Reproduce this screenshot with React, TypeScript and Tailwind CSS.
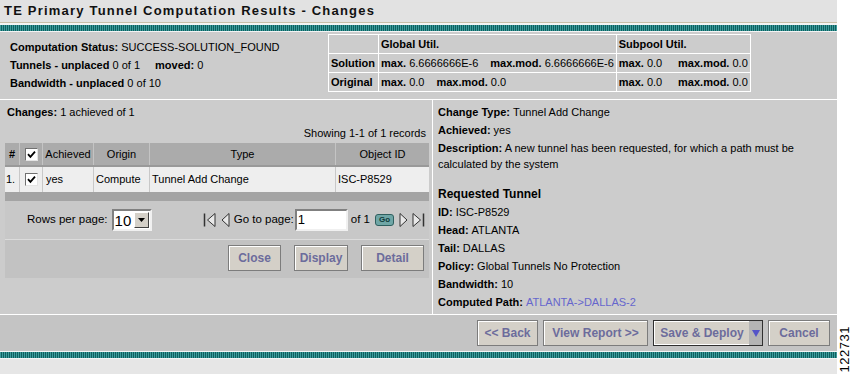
import React from 'react'

const tealBar =
  'h-[6px] bg-[repeating-linear-gradient(90deg,#3c9c9c_0px,#3c9c9c_1px,#0f5f5f_1px,#0f5f5f_2px)]'

const btn =
  'h-[26px] bg-[#d4d0c8] border border-[#7c7c7c] shadow-[inset_1px_1px_0_#ffffff] text-[12px] font-bold text-[#6c6c9c] flex items-center justify-center'

function Check() {
  return (
    <span className="w-[13px] h-[13px] bg-white border border-t-[#707070] border-l-[#707070] border-b-[#e4e4e4] border-r-[#e4e4e4] flex items-center justify-center">
      <svg width="9" height="9" viewBox="0 0 9 9">
        <path d="M1 4.2 L3.4 6.8 L8 1.6" stroke="#000" strokeWidth="1.8" fill="none" />
      </svg>
    </span>
  )
}

function Tri({ dir, bar }: { dir: 'left' | 'right'; bar?: boolean }) {
  const left = dir === 'left'
  return (
    <svg width={bar ? 14 : 9} height="16" viewBox={bar ? '0 0 14 16' : '0 0 9 16'} className="shrink-0">
      {bar && left && <path d="M1.5 1.5v13" stroke="#333" strokeWidth="1.5" />}
      {bar && !left && <path d="M12.5 1.5v13" stroke="#333" strokeWidth="1.5" />}
      {left ? (
        <path d={bar ? 'M12 1.5 L4.5 8 L12 14.5 Z' : 'M8 1.5 L1 8 L8 14.5 Z'} fill="#e8e8e8" stroke="#333" strokeWidth="1" />
      ) : (
        <path d={bar ? 'M2 1.5 L9.5 8 L2 14.5 Z' : 'M1 1.5 L8 8 L1 14.5 Z'} fill="#e8e8e8" stroke="#333" strokeWidth="1" />
      )}
    </svg>
  )
}

function Field({ label, value, link }: { label: string; value: string; link?: boolean }) {
  return (
    <div className="h-[18px] flex items-center">
      <b>{label}</b>
      <span className={`ml-[3px] ${link ? 'text-[#6666cc]' : ''}`}>{value}</span>
    </div>
  )
}

export default function App() {
  return (
    <div className="w-[851px] h-[374px] flex bg-white text-[11px] text-black font-['Liberation_Sans',Arial,sans-serif] overflow-hidden">
      <div className="w-[837px] flex flex-col">
        {/* title */}
        <div className="h-[22px] bg-[#e2e2e2] flex items-center pl-[4px]">
          <span className="text-[13px] font-bold tracking-[1.2px] text-[#111]">TE Primary Tunnel Computation Results - Changes</span>
        </div>
        <div className="h-px bg-[#c9bfa8]" />
        <div className="h-[2px] bg-[#f4f4f4]" />
        <div className={tealBar} />
        <div className="h-px bg-[#f4f4f4]" />

        {/* summary */}
        <div className="h-[67px] bg-[#cccccc] flex">
          <div className="w-[328px] pl-[10px] pt-[6px] leading-[18px]">
            <div><b>Computation Status:</b> SUCCESS-SOLUTION_FOUND</div>
            <div><b>Tunnels - unplaced</b> 0 of 1 <b className="ml-[12px]">moved:</b> 0</div>
            <div><b>Bandwidth - unplaced</b> 0 of 10</div>
          </div>
          <table className="mt-[2px] h-[58px] border-collapse border border-white self-start">
            <tbody>
              <tr className="h-[19px]">
                <td className="w-[50px] border border-white" />
                <td className="w-[237px] border border-white px-[2px] font-bold">Global Util.</td>
                <td className="w-[134px] border border-white px-[2px] font-bold">Subpool Util.</td>
              </tr>
              <tr className="h-[19px]">
                <td className="border border-white px-[2px] font-bold">Solution</td>
                <td className="border border-white px-[2px] whitespace-nowrap">
                  <b>max.</b> 6.6666666E-6<b className="ml-[12px]">max.mod.</b> 6.6666666E-6
                </td>
                <td className="border border-white px-[2px]">
                  <div className="flex justify-between whitespace-nowrap">
                    <span><b>max.</b> 0.0</span>
                    <span><b>max.mod.</b> 0.0</span>
                  </div>
                </td>
              </tr>
              <tr className="h-[19px]">
                <td className="border border-white px-[2px] font-bold">Original</td>
                <td className="border border-white px-[2px] whitespace-nowrap">
                  <b>max.</b> 0.0<b className="ml-[12px]">max.mod.</b> 0.0
                </td>
                <td className="border border-white px-[2px]">
                  <div className="flex justify-between whitespace-nowrap">
                    <span><b>max.</b> 0.0</span>
                    <span><b>max.mod.</b> 0.0</span>
                  </div>
                </td>
              </tr>
            </tbody>
          </table>
        </div>
        <div className="h-px bg-white" />

        {/* middle */}
        <div className="h-[214px] flex bg-[#cccccc]">
          {/* left: changes table */}
          <div className="w-[432px] flex flex-col">
            <div className="h-[24px] flex items-center pl-[7px]"><b>Changes:</b><span className="ml-[3px]">1 achieved of 1</span></div>
            <div className="h-[19px] flex items-center justify-end pr-[6px]">Showing 1-1 of 1 records</div>
            <div className="mx-[5px] w-[424px] flex flex-col">
              <div className="h-[24px] bg-[#ababab] flex border-b-2 border-[#999999]">
                <div className="w-[15px] flex items-center justify-center font-bold border-r border-[#c4c4c4]">#</div>
                <div className="w-[23px] flex items-center justify-center border-r border-[#c4c4c4]"><Check /></div>
                <div className="w-[51px] flex items-center justify-center border-r border-[#c4c4c4]">Achieved</div>
                <div className="w-[56px] flex items-center justify-center border-r border-[#c4c4c4]">Origin</div>
                <div className="w-[186px] flex items-center justify-center border-r border-[#c4c4c4]">Type</div>
                <div className="flex-1 flex items-center justify-center">Object ID</div>
              </div>
              <div className="h-[25px] bg-[#eeeeee] flex">
                <div className="w-[15px] flex items-center pl-[1px] border-r border-[#c8c8c8]">1.</div>
                <div className="w-[23px] flex items-center justify-center border-r border-[#c8c8c8]"><Check /></div>
                <div className="w-[51px] flex items-center pl-[3px] border-r border-[#c8c8c8]">yes</div>
                <div className="w-[56px] flex items-center pl-[2px] border-r border-[#c8c8c8]">Compute</div>
                <div className="w-[186px] flex items-center pl-[2px] border-r border-[#c8c8c8]">Tunnel Add Change</div>
                <div className="flex-1 flex items-center pl-[2px]">ISC-P8529</div>
              </div>
              <div className="h-[9px] bg-[#a4a4a4]" />
              <div className="h-[39px] bg-[#c8c8c8] border-b border-[#dcdcdc] flex items-center text-[11.5px] whitespace-nowrap">
                <span className="ml-[22px] shrink-0">Rows per page:</span>
                <div className="ml-[4px] shrink-0 w-[40px] h-[22px] bg-white border-2 border-t-[#808080] border-l-[#808080] border-b-[#f0f0f0] border-r-[#f0f0f0] flex items-center">
                  <span className="flex-1 pl-[1px] text-[15px] leading-none">10</span>
                  <span className="w-[15px] h-[16px] mr-[1px] bg-[#d4d0c8] border border-t-white border-l-white border-b-[#404040] border-r-[#404040] flex items-center justify-center">
                    <svg width="7" height="4" viewBox="0 0 7 4"><path d="M0 0h7L3.5 4z" fill="#000" /></svg>
                  </span>
                </div>
                <div className="ml-auto mr-[4px] flex items-center shrink-0">
                  <Tri dir="left" bar />
                  <span className="ml-[4px] flex"><Tri dir="left" /></span>
                  <span className="ml-[4px]">Go to page:</span>
                  <div className="ml-[1px] w-[53px] h-[22px] bg-white border-2 border-t-[#808080] border-l-[#808080] border-b-[#f0f0f0] border-r-[#f0f0f0] flex items-center pl-[1px] text-[13px]">1</div>
                  <span className="ml-[3px]">of 1</span>
                  <span className="ml-[5px] w-[19px] h-[12px] rounded-[3px] bg-[#6fa6a6] border border-[#2f5f5f] flex items-center justify-center text-[8px] font-bold text-[#0e3a3a]">Go</span>
                  <span className="ml-[5px] flex"><Tri dir="right" /></span>
                  <span className="ml-[3px] flex"><Tri dir="right" bar /></span>
                </div>
              </div>
              <div className="h-[38px] bg-[#c2c2c2] flex justify-end items-start pt-[5px] pr-[5px] gap-[13px]">
                <div className={`${btn} w-[53px]`}>Close</div>
                <div className={`${btn} w-[54px]`}>Display</div>
                <div className={`${btn} w-[63px]`}>Detail</div>
              </div>
            </div>
          </div>
          <div className="w-px bg-white" />
          {/* right: details */}
          <div className="flex-1 pl-[5px] pt-[3px] leading-[18px]">
            <Field label="Change Type:" value="Tunnel Add Change" />
            <Field label="Achieved:" value="yes" />
            <p className="leading-[16px] mt-px">
              <b>Description:</b> A new tunnel has been requested, for which a path must be
              <br />calculated by the system
            </p>
            <div className="h-[18px] mt-[13px] flex items-center font-bold text-[12px]">Requested Tunnel</div>
            <Field label="ID:" value="ISC-P8529" />
            <Field label="Head:" value="ATLANTA" />
            <Field label="Tail:" value="DALLAS" />
            <Field label="Policy:" value="Global Tunnels No Protection" />
            <Field label="Bandwidth:" value="10" />
            <Field label="Computed Path:" value="ATLANTA->DALLAS-2" link />
          </div>
        </div>
        <div className="h-px bg-white" />

        {/* wizard buttons */}
        <div className="h-[36px] bg-[#c4c4c4] flex justify-end items-start pt-[5px] pr-[7px] gap-[5px]">
          <div className={`${btn} w-[61px]`}>&lt;&lt; Back</div>
          <div className={`${btn} w-[105px]`}>View Report &gt;&gt;</div>
          <div className="w-[110px] h-[26px] border border-[#303030] bg-[#d4d0c8] flex">
            <div className="flex-1 border border-white border-r-0 flex items-center justify-center text-[12px] font-bold text-[#6c6c9c]">Save &amp; Deploy</div>
            <div className="w-[13px] bg-[#b4b4b4] flex items-center justify-center">
              <svg width="8" height="7" viewBox="0 0 8 7"><path d="M0 0h8L4 7z" fill="#5454c8" /></svg>
            </div>
          </div>
          <div className={`${btn} w-[62px]`}>Cancel</div>
        </div>
        <div className="h-px bg-[#f4f4f4]" />
        <div className={tealBar} />
        <div className="h-px bg-[#f4f4f4]" />
        <div className="flex-1 bg-[#e6e6e6]" />
      </div>
      <div className="flex-1 flex flex-col justify-end items-center pb-[2px]">
        <span className="[writing-mode:vertical-rl] rotate-180 text-[13px] leading-none tracking-[0.5px]">122731</span>
      </div>
    </div>
  )
}
